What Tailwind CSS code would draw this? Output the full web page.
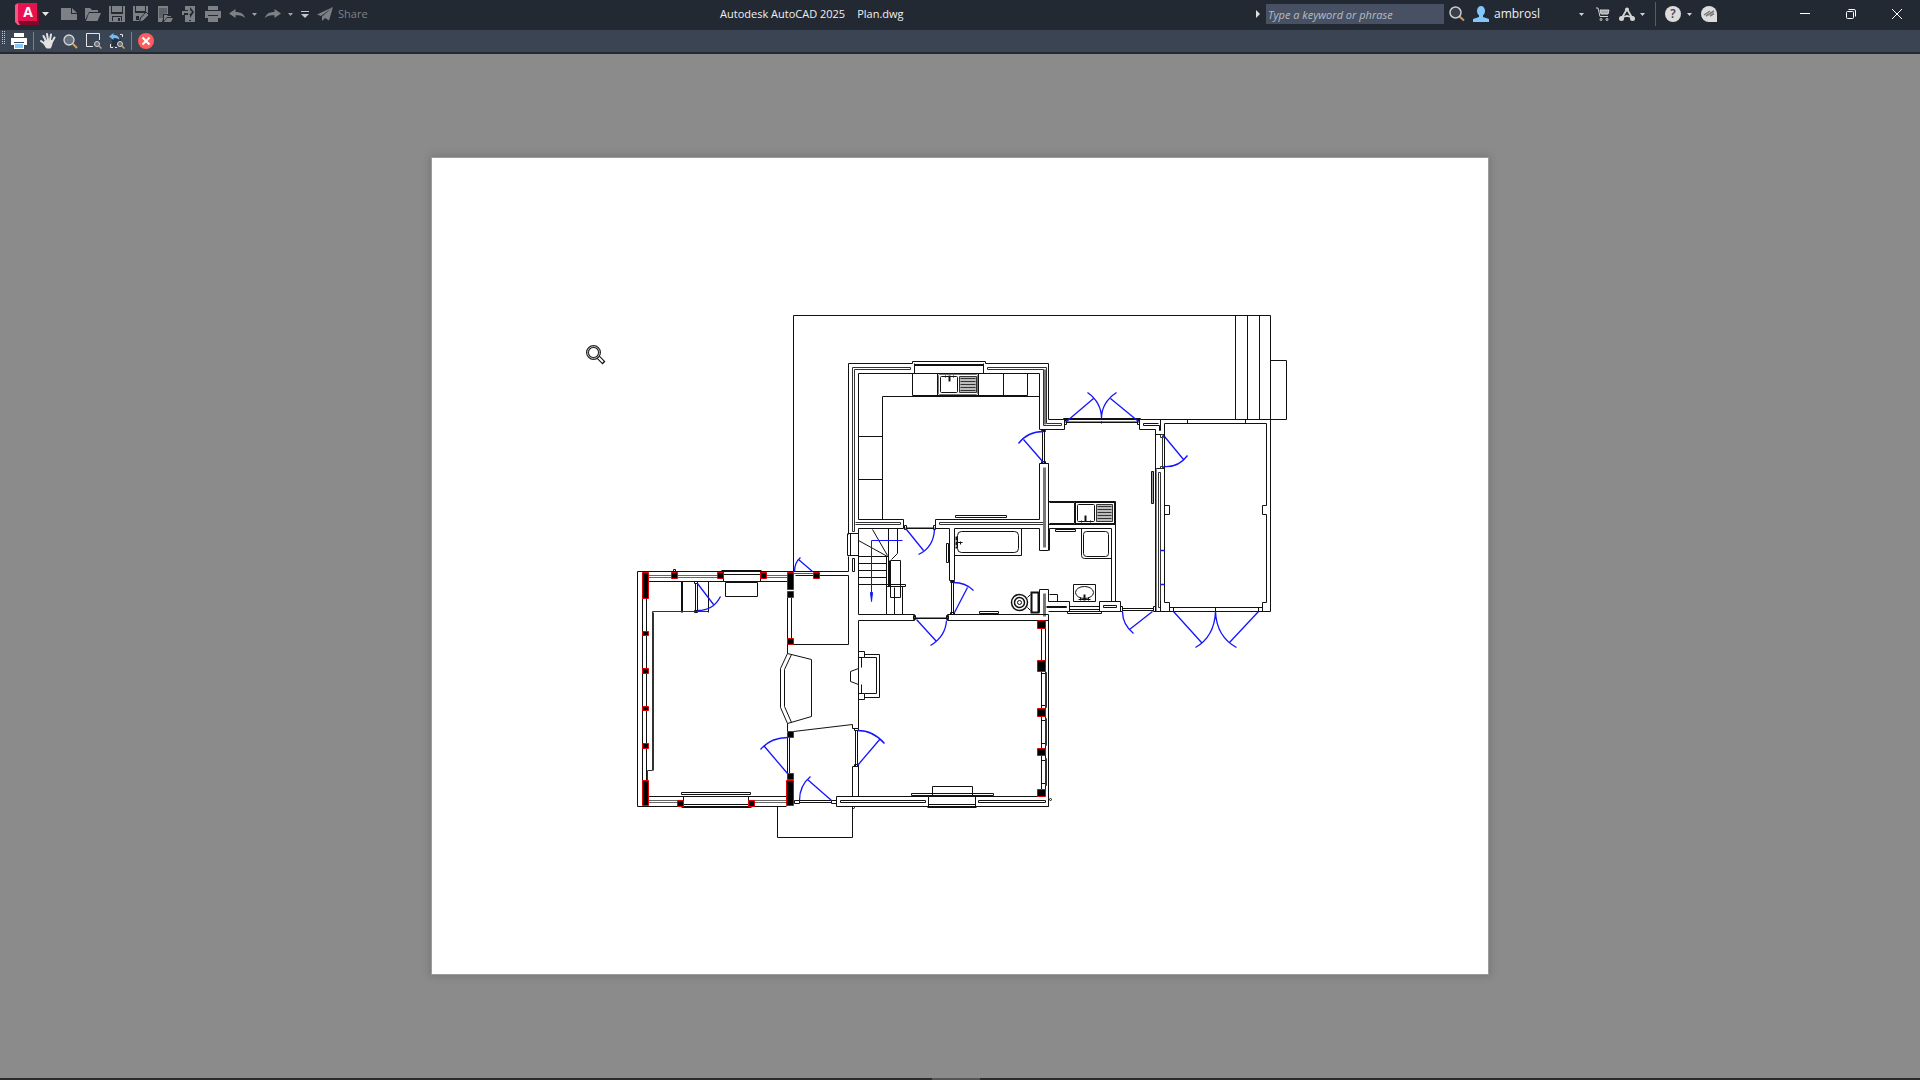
<!DOCTYPE html>
<html lang="en">
<head>
  <meta charset="UTF-8" />
  <meta name="viewport" content="width=device-width, initial-scale=1.0">
  <title>Autodesk AutoCAD 2025 - Plan.dwg</title>
  <script src="https://cdn.jsdelivr.net/npm/@tailwindcss/browser@4"></script>
</head>
<body class="flex min-h-screen flex-col overflow-hidden bg-[#8b8b8b] font-['Open_Sans','Noto_Sans',sans-serif] text-[11px] text-[#f0f0f0]">

  <!-- Title bar -->
  <header class="flex h-[30px] shrink-0 items-center bg-[#222933] pb-0.5">
    <div class="flex items-center pl-[15px] text-[#7d8186]">
      <button aria-label="Application menu" class="relative flex h-[22px] w-6 items-center justify-center">
        <svg class="absolute inset-0" width="24" height="22" viewBox="0 0 24 22">
          <path d="M0 2L3 0H22V18L24 22H3L0 19Z" fill="#ec5c86"/>
          <path d="M3 18H22L24 4V22H5Z" fill="#7d0c2c"/>
          <path d="M3 0H22V18H3Z" fill="#e5124f"/>
        </svg>
        <span class="relative -top-0.5 left-px text-sm font-bold leading-none text-white">A</span>
      </button>
      <button aria-label="Menu arrow" class="mr-1.5 flex h-6 w-3 items-center justify-center">
        <svg width="7" height="4" viewBox="0 0 7 4"><path d="M0 0H7L3.500 4Z" fill="#e8e8e8"/></svg>
      </button>
      <button aria-label="New" class="flex h-6 w-6 items-center justify-center">
        <svg width="16" height="16" viewBox="0 0 16 16" fill="currentColor"><path d="M0 2H10V8H16V14H0Z"/><path d="M11 2L16 7H11Z"/></svg>
      </button>
      <button aria-label="Open" class="flex h-6 w-6 items-center justify-center">
        <svg width="16" height="16" viewBox="0 0 16 16" fill="currentColor"><path d="M0 2H5L7 4H13V6H4L1 12L0 14Z"/><path d="M4 7H16L12.500 15H1Z"/></svg>
      </button>
      <button aria-label="Save" class="flex h-6 w-6 items-center justify-center">
        <svg width="16" height="16" viewBox="0 0 16 16" fill="currentColor"><path fill-rule="evenodd" d="M0 0H2V8H14V0H16V16H0ZM3 10V15H13V10Z"/><path d="M3 0H13V6H3Z"/><path d="M4 11H12V15H4Z"/><path d="M9 12H11V15H9Z" fill="#222933"/></svg>
      </button>
      <button aria-label="Save as" class="flex h-6 w-6 items-center justify-center">
        <svg width="16" height="16" viewBox="0 0 16 16" fill="currentColor"><path d="M0 0H2V7H13V0H15V7L8 14L8 15H0ZM3 0H12V5H3ZM3 10V14H6V10Z" fill-rule="evenodd"/><path d="M13 6L16 9L10 15L6.500 16L7.500 12Z" stroke="#222933"/></svg>
      </button>
      <button aria-label="Open from web and mobile" class="flex h-6 w-6 items-center justify-center">
        <svg width="16" height="16" viewBox="0 0 16 16" fill="currentColor"><path fill-rule="evenodd" d="M1 0H11V8H6V13L5 16H1ZM2 2V12H6V8L10 7V2Z"/><path opacity=".65" d="M2 2H10V8H6V12H2Z"/><path d="M7 9H10L11 10H14V11H10L7 15ZM10 12H16L14 16H7Z"/></svg>
      </button>
      <button aria-label="Save to web and mobile" class="flex h-6 w-6 items-center justify-center">
        <svg width="16" height="16" viewBox="0 0 16 16" fill="currentColor"><path d="M4 0H14V16H4V9H9V12L13 6L9 1V4H4Z"/><path d="M1 5H7V2L11 6L7 10V7H3V9H1Z"/><path d="M8 14H10V15H8Z" fill="#222933"/></svg>
      </button>
      <button aria-label="Plot" class="flex h-6 w-6 items-center justify-center">
        <svg width="16" height="16" viewBox="0 0 16 16" fill="currentColor"><path d="M3 0H13V4H3ZM0 5H16V12H13V9H3V12H0ZM3 10H13V16H3Z"/></svg>
      </button>
      <button aria-label="Undo" class="flex h-6 w-6 items-center justify-center">
        <svg width="16" height="10" viewBox="0 0 16 10" fill="currentColor"><path d="M0 4.500L6.500 0V3C12 3 15 5 16 9C13 6.500 11 6.200 6.500 6.200V9Z"/></svg>
      </button>
      <button aria-label="Undo list" class="flex h-6 w-3 items-center pl-[3px]">
        <svg width="5" height="3" viewBox="0 0 5 3"><path d="M0 0H5L2.500 3Z" fill="#a0a3a8"/></svg>
      </button>
      <button aria-label="Redo" class="flex h-6 w-6 items-center justify-center">
        <svg width="16" height="10" viewBox="0 0 16 10" fill="currentColor"><path d="M16 4.500L9.500 0V3C4 3 1 5 0 9C3 6.500 5 6.200 9.500 6.200V9Z"/></svg>
      </button>
      <button aria-label="Redo list" class="flex h-6 w-3 items-center pl-[3px]">
        <svg width="5" height="3" viewBox="0 0 5 3"><path d="M0 0H5L2.500 3Z" fill="#a0a3a8"/></svg>
      </button>
      <button aria-label="Customize toolbar" class="flex h-6 w-4 items-center justify-center">
        <svg width="8" height="7" viewBox="0 0 8 7"><path d="M0 0H8V1H0ZM0 3H8L4 7Z" fill="#c4c6c9"/></svg>
      </button>
      <button class="ml-1 flex h-6 items-center gap-[5px]">
        <svg width="16" height="14" viewBox="0 0 16 14" fill="currentColor"><path d="M16 0L0 7.500L4 9ZM16 0L5 9.500V14L8 11L12 13.500Z"/></svg>
        Share
      </button>
    </div>

    <h1 class="flex flex-1 justify-center gap-3 whitespace-nowrap"><span>Autodesk AutoCAD 2025</span><span>Plan.dwg</span></h1>

    <div class="flex items-center">
      <button aria-label="Collapse search" class="flex h-6 w-2.5 items-center">
        <svg width="4" height="8" viewBox="0 0 4 8"><path d="M0 0L4 4L0 8Z" fill="#e0e0e0"/></svg>
      </button>
      <input type="text" aria-label="Search" placeholder="Type a keyword or phrase" class="h-5 w-[178px] bg-[#485164] px-0.5 italic placeholder:text-[#b9bcc2]">
      <button aria-label="Find" class="ml-[5px] flex h-6 w-6 items-center">
        <svg width="16" height="16" viewBox="0 0 16 16" fill="none"><path d="M10 10L15 14.500" stroke="#c59a5f" stroke-width="2"/><circle cx="6.500" cy="6.500" r="5.500" fill="#394049" stroke="#c9ccd0" stroke-width="1.500"/></svg>
      </button>
      <button class="flex h-6 w-[111px] items-center gap-[5px] text-xs">
        <svg width="16" height="16" viewBox="0 0 16 16" fill="#83c7fa"><ellipse cx="8" cy="5" rx="4" ry="5"/><path d="M6 9H10V11L16 13V16H0V13L6 11Z"/></svg>
        ambrosl
        <svg class="ml-auto" width="5" height="3" viewBox="0 0 5 3"><path d="M0 0H5L2.500 3Z" fill="#d0d2d5"/></svg>
      </button>
      <button aria-label="App store" class="ml-3 flex h-6 w-[23px] items-center">
        <svg width="14" height="14" viewBox="0 0 14 14" fill="none" stroke="#d2d4d6"><path d="M0 1H2L4 9.500H12"/><path d="M4 3H13L12 7H5Z" fill="#a5a8ab"/><circle cx="5" cy="12.500" r="1"/><circle cx="11" cy="12.500" r="1"/></svg>
      </button>
      <button aria-label="Autodesk App" class="flex h-6 w-9 items-center gap-[5px]">
        <svg width="16" height="14" viewBox="0 0 16 14" fill="none"><path d="M8 2L2.500 11.500M8 2L13.500 11.500M4 10L8 9L12 10" stroke="#d5d5d5" stroke-width="1.800"/><circle cx="8" cy="2.500" r="2" fill="#d5d5d5"/><circle cx="2.500" cy="11.500" r="2.500" fill="#d5d5d5"/><circle cx="13.500" cy="11.500" r="2.500" fill="#d5d5d5"/></svg>
        <svg width="5" height="3" viewBox="0 0 5 3"><path d="M0 0H5L2.500 3Z" fill="#d0d2d5"/></svg>
      </button>
      <div class="mr-[9px] h-6 w-px bg-[#555e6d]"></div>
      <button aria-label="Help" class="flex h-6 w-9 items-center gap-1.5">
        <span class="flex h-4 w-4 items-center justify-center rounded-full bg-[#dcdcdc] text-xs font-semibold text-[#3a3f47]">?</span>
        <svg width="5" height="3" viewBox="0 0 5 3"><path d="M0 0H5L2.500 3Z" fill="#d0d2d5"/></svg>
      </button>
      <button aria-label="Assistant" class="flex h-6 w-[81px] items-center">
        <svg width="16" height="16" viewBox="0 0 16 16"><path d="M8 0A8 8 0 1 0 8 16H16V8A8 8 0 0 0 8 0Z" fill="#dcdcdc"/><path d="M3 9L9 5M5 10L13 5M9 10L13 7.500" stroke="#777" stroke-width="1.500"/></svg>
      </button>
      <button aria-label="Minimize" class="flex h-7 w-[46px] items-center justify-center">
        <svg width="10" height="10" viewBox="0 0 10 10"><path d="M0 4H10V5H0Z" fill="#fff"/></svg>
      </button>
      <button aria-label="Restore" class="flex h-7 w-[46px] items-center justify-center">
        <svg width="10" height="10" viewBox="0 0 10 10" fill="none" stroke="#fff"><rect x=".5" y="2.500" width="7" height="7" rx="1"/><path d="M2.500 .5H8Q9.500 .5 9.500 2V7.500"/></svg>
      </button>
      <button aria-label="Close" class="flex h-7 w-[46px] items-center justify-center">
        <svg width="10" height="10" viewBox="0 0 10 10" stroke="#fff"><path d="M0 0L10 10M10 0L0 10"/></svg>
      </button>
    </div>
  </header>

  <!-- Plot preview toolbar -->
  <nav class="flex h-6 shrink-0 items-center border-b-2 border-[#222933] bg-[#3b4453]">
    <div class="flex h-full w-[7px] items-start justify-center pt-px">
      <svg width="3" height="13" viewBox="0 0 3 13" stroke="#c3c6ca" stroke-dasharray="1 1"><path d="M.5 0V13M2.500 0V13"/></svg>
    </div>
    <button aria-label="Plot" class="flex h-5 w-[23px] items-center justify-center">
      <svg width="16" height="16" viewBox="0 0 16 16" fill="#fff"><path d="M3 0H13V4H3ZM0 5H16V12H13V9H3V12H0Z"/><path d="M3 10H13V16H3Z"/><path d="M4 11H12V15H4Z" fill="#86c8f5"/></svg>
    </button>
    <div class="ml-[3px] mr-0.5 h-[18px] w-px bg-[#7a818c]"></div>
    <button aria-label="Pan" class="flex h-5 w-[23px] items-center justify-center">
      <svg width="16" height="16" viewBox="0 0 16 16" fill="none" stroke="#e2e2e2" stroke-width="2" stroke-linecap="round"><path d="M6 8L3.500 3M8 7L7 1M10 7L11 1.500M12 9L14.500 4.500M5 11L1 8"/><path d="M5 8L12 7.500L12 11L10.500 15H6.500L4 11Z" fill="#e2e2e2" stroke-width="1"/></svg>
    </button>
    <button aria-label="Zoom" class="flex h-5 w-[23px] items-center justify-center">
      <svg width="15" height="15" viewBox="0 0 15 15" fill="none"><path d="M10 10L14 14" stroke="#d4a55d" stroke-width="2"/><circle cx="6" cy="6" r="5" fill="#687180" stroke="#d5d7da" stroke-width="1.300"/></svg>
    </button>
    <button aria-label="Zoom window" class="flex h-5 w-[23px] items-center justify-center">
      <svg width="16" height="16" viewBox="0 0 16 16" fill="none"><path d="M7 13.500H.5V.5H13.500V7" stroke="#e5e5e5"/><path d="M13 13L15.500 15.500" stroke="#d4a55d" stroke-width="1.500"/><circle cx="11" cy="11" r="2.500" fill="#687180" stroke="#d5d7da"/></svg>
    </button>
    <button aria-label="Zoom previous" class="flex h-5 w-[23px] items-center justify-center">
      <svg width="16" height="16" viewBox="0 0 16 16" fill="none"><path d="M11 1.500H13.500V4M1.500 11V14.500H4M6 14.500H8" stroke="#e5e5e5"/><path d="M3 6H12V9L8 13H3Z" fill="#27303c"/><path d="M0 3.500L4.500 0V2C8 2 10 3 10.500 7C9 5.500 7.500 5 4.500 5V7Z" fill="#6fbdf2"/><path d="M13 13L15.500 15.500" stroke="#d4a55d" stroke-width="1.500"/><circle cx="11" cy="11" r="2.500" fill="#687180" stroke="#d5d7da"/></svg>
    </button>
    <div class="ml-[3px] mr-0.5 h-[18px] w-px bg-[#7a818c]"></div>
    <button aria-label="Close preview" class="flex h-5 w-[23px] items-center justify-center">
      <svg width="16" height="16" viewBox="0 0 16 16"><circle cx="8" cy="8" r="8" fill="#fb5e5e"/><path d="M4.500 4.500L11.500 11.500M11.500 4.500L4.500 11.500" stroke="#fff" stroke-width="2"/></svg>
    </button>
  </nav>

  <!-- Paper sheet -->
  <main class="flex flex-1 items-center justify-center">
    <div class="aspect-[1056/816] w-[55%] bg-white shadow-[0_0_0_1px_#9c9c9c,0_0_8px_2px_rgb(0_0_0/0.16)]">
      <svg class="block h-full w-full" viewBox="432 158 1056 816" role="img" aria-label="Ground floor plan">
        <g transform="translate(.5 .5)" fill="none" stroke="#111" stroke-width="1">

          <!-- terrace and steps -->
          <path d="M793 571V315H1270V611M1235 315V419M1247 315V419M1259 315V419M1270 360H1286V419H1270"/>

          <!-- kitchen walls -->
          <path d="M848 534V363H912M985 363H1048V419H1063M858 519V373H1039V429H1064V419M914 373V363M983 373V363"/>
          <path d="M912 361H985M912 361V363M985 361V363M914 364H983M914 365H983"/>
          <path d="M852 531V367H910V369H854V531H852M987 369V367H1046V423H1061V425H1043V369H987" stroke="#333"/>
          <path d="M1044.500 369V424" stroke="#777" stroke-width="2"/>
          <path d="M882 519V396H1039M858 436H882M858 479H882"/>
          <path d="M912 373V395H937V373M978 395H1027V373M1003 373V395"/>
          <path d="M858 519H903V528H858M935 528V519H1039M935 528H949M954 528H1039V550H1048V463H1039V519"/>
          <path d="M855 522H900V524H855M1043 522H939V524H1043" stroke="#333"/>
          <path d="M905 527H934" stroke="#888"/>
          <path d="M905 528H934M904 525H906V529H904ZM933 525H935V529H933Z"/>
          <path d="M955 515H1006V517H955Z"/>
          <path d="M1044 467V547" stroke="#777" stroke-width="3"/>
          <path d="M1042 430V463M1044 430V463M1041 430H1045V431H1041ZM1041 461H1045V463H1041Z"/>

          <!-- kitchen sink -->
          <rect x="937" y="373" width="41" height="22"/>
          <rect x="938" y="374" width="39" height="20" rx="1" stroke="#777"/>
          <rect x="940" y="376" width="17" height="16" rx="1"/>
          <path d="M959 376H976V392H959Z" fill="#bbb" stroke="#333"/>
          <path d="M960 378H975M960 381H975M960 384H975M960 387H975M960 390H975" stroke="#333"/>
          <path d="M943 376H955M945 375V377M953 375V377"/><path d="M949 375V381" stroke-width="2"/>

          <!-- back hall and utility -->
          <path d="M1064 421H1139" stroke="#888"/>
          <path d="M1063 418H1140V419H1063ZM1065 422H1138M1064 420H1066V424H1064ZM1137 420H1139V424H1137Z"/>
          <path d="M1101 421V423M1140 419H1270M1139 419V429H1155V611M1160 419V430H1159V425H1143V423H1158M1155 434H1164M1155 468H1164"/>
          <path d="M1162 435V468M1164 435V468M1160 434H1163V437H1160ZM1160 466H1163V468H1160Z" stroke="#333"/>
          <path d="M1164 602V423H1266M1187 419V423M1245 419V423"/>
          <path d="M1158 472H1160V607H1158Z" stroke="#333"/><path d="M1156 468V611" stroke="#888"/>
          <path d="M1151 471H1153V503H1151Z" fill="#999"/>
          <path d="M1048 463V524M1048 501H1115V601M1048 524H1115M1049 502H1074V523H1049M1049 528V550M1049 528H1111V601"/>
          <rect x="1075" y="502" width="39" height="21"/>
          <rect x="1077" y="504" width="17" height="17" rx="1"/>
          <path d="M1096 504H1112V521H1096Z" fill="#bbb" stroke="#333"/>
          <path d="M1097 506H1111M1097 509H1111M1097 512H1111M1097 515H1111M1097 518H1111" stroke="#333"/>
          <path d="M1079 521H1092M1081 520V522M1090 520V522"/><path d="M1085 515V521" stroke-width="2"/>
          <path d="M1055 529H1075V531H1055ZM1081 528V555Q1081 558 1084 558H1111"/>
          <rect x="1083" y="531" width="25" height="25" rx="3"/>
          <path d="M1039 612V589H1048V601H1069V611M1049 594H1057V601M1099 611V601H1120V611H1048M1069 606H1099M1069 609H1099M1067 611H1101V613H1067Z"/>
          <path d="M1044 593V616" stroke="#777" stroke-width="3"/>
          <path d="M1046 606H1066V607H1046M1103 605H1116V607H1103Z"/>
          <path d="M1073 584H1095V601H1073Z"/><ellipse cx="1084" cy="592" rx="9" ry="6"/>
          <path d="M1078 599H1090M1080 597V600M1088 597V600"/><path d="M1084 594V600" stroke-width="2"/>
          <path d="M1122 608H1153M1122 610H1153M1120 606H1122V611H1120ZM1153 606H1155V611H1153Z"/>

          <!-- garage -->
          <path d="M1164 505H1169V514H1164M1164 602H1169V611M1266 423V505H1262V514H1266V602H1262V611M1169 607H1262M1154 611H1270M1173 607V611M1215 607V611M1258 607V611M1160 600V611"/>

          <!-- bathroom -->
          <path d="M949 528V580H954V528M951 581V614M953 581V614M950 581H954V582H950ZM950 612H954V614H950Z"/>
          <path d="M946 543H948V562H946ZM979 611H998V613H979Z"/>
          <path d="M954 555H1021V528"/>
          <rect x="957" y="531" width="61" height="21" rx="4"/>
          <path d="M956 536V548" stroke-width="2" stroke-dasharray="4 1"/><path d="M956 542H962M960 541V544"/>
          <circle cx="1019" cy="602" r="8" stroke-width="1.500"/><circle cx="1019" cy="602" r="5" stroke-width="1.500"/><circle cx="1019" cy="602" r="2"/>
          <path d="M1027 597L1030 594M1027 607L1030 610"/>
          <path d="M1031 592H1038V612H1031Z" stroke-width="2"/>

          <!-- stairs -->
          <path d="M848 556V571M848 533H858V555H847V533M850 533V555M852 558H854V571H852Z"/>
          <path d="M858 528V614M858 540L887 556M872 529L887 555M888 528V586M897 528V553L891 559M858 556H888M858 563H886M858 570H886M858 577H886M858 584H905V586H886M886 556V614"/>
          <path d="M890 560H900V597H890ZM902 586V614M894 587V614M889 560V586"/>
          <path d="M858 614H914V620H858V728M1048 620H947V614H1048V806H975"/>
          <path d="M914 617H947" stroke="#888"/>
          <path d="M914 618H947M913 615H915V619H913ZM946 615H948V619H946Z"/>

          <!-- store and left room -->
          <path d="M793 571H848M795 575H848V644H793M787 597V653M791 597V638"/>
          <path d="M793 573H813" stroke="#555"/>
          <path d="M793 571H637V806H786M642 598V780M646 598V780M648 581H787M721 570H761M723 571V581M760 571V581M723 574H760"/>
          <path d="M648 575H717M648 577H717M766 575H787M766 577H787" stroke="#666"/>
          <path d="M673 571V569H675V571M725 582H757V596H725Z"/>
          <path d="M681 581V612M682 581V612M695 583V611M697 583V611M694 581H697V583H694ZM694 610H697V612H694ZM708 581V612"/>
          <path d="M708 611H652V770H647V780M653 612V770" stroke="#333"/>
          <path d="M787 653L780 668V707L787 723V731M791 654L784 669V706L791 722M787 653L811 659V716L787 723"/>
          <path d="M787 737V773M789 737V773M793 731L852 724V728H858"/>

          <!-- front wall -->
          <path d="M648 796H786M683 796V806M748 796V806M683 804H748M681 807H751M681 792H750V794H681Z"/>
          <path d="M648 800H677M648 802H677M754 800H786M754 802H786" stroke="#666"/>
          <path d="M794 800H799V803H794ZM831 800H836V803H831ZM799 800H831M799 802H831"/>
          <path d="M928 796H836V806H928ZM840 800H925V802H840ZM978 800H1045V802H978ZM928 804H975M928 796H1037M975 796V806M927 807H976M927 806H1048"/>
          <path d="M932 796V786H972V796M911 793H993V795H911Z"/>
          <path d="M777 806V837H852V806M852 796V766H858V796M855 730V766M857 730V766M854 728H858V730H854ZM854 764H858V766H854Z"/>
          <circle cx="853" cy="807" r="1"/><circle cx="1050" cy="799" r="1"/>

          <!-- living room hearth -->
          <path d="M858 668L850 671V681L858 684M858 651H864V657H858ZM858 693H864V699H858ZM861 657V667M861 684V693M864 654H879V697H864M864 657H876V693H864"/>

          <!-- east wall windows -->
          <path d="M1041 628V790M1045 628V790M1041 673H1045M1041 705H1045M1041 720H1045M1041 743H1045M1041 760H1045M1041 783H1045"/>
          <path d="M1045 672H1046V707H1045ZM1045 718H1046V745H1045ZM1045 758H1046V785H1045Z" stroke="#333"/>

          <!-- timber posts -->
          <g fill="#000" stroke="#e00000">
            <path d="M642 572H648V598H642ZM787 572H793V589H787ZM642 780H648V805H642ZM786 780H793V805H786Z"/>
            <path d="M671 572H677V578H671ZM717 572H723V578H717ZM760 572H766V578H760ZM813 572H819V578H813Z"/>
            <path d="M787 591H793V597H787ZM787 638H793V644H787ZM787 731H793V737H787ZM787 773H793V779H787Z"/>
            <path d="M642 631H648V635H642ZM642 668H648V673H642ZM642 706H648V710H642ZM642 743H648V748H642Z"/>
            <path d="M677 800H683V806H677ZM748 800H754V806H748Z"/>
            <path d="M1037 620H1045V628H1037ZM1037 660H1045V671H1037ZM1037 708H1045V716H1037ZM1037 748H1045V755H1037ZM1037 789H1045V796H1037Z"/>
          </g>

          <!-- door swings -->
          <g stroke="#1414ff" stroke-width="1.300">
            <path d="M1043 462L1023 439M1018 443Q1027 431 1043 431"/>
            <path d="M1066 421L1093 398M1087 392Q1101 402 1101 418M1138 421L1110 398M1116 392Q1101 402 1101 418"/>
            <path d="M1164 436L1183 459M1164 466Q1178 467 1187 455"/>
            <path d="M906 529L923 550M918 554Q933 547 934 529"/>
            <path d="M954 612L967 587M953 582Q965 582 973 590"/>
            <path d="M916 619L936 641M930 645Q945 636 946 620"/>
            <path d="M1152 611L1129 629M1122 611Q1122 624 1133 633"/>
            <path d="M1173 611L1201 642M1195 647Q1214 636 1215 611M1258 611L1229 642M1236 647Q1216 636 1215 611"/>
            <path d="M1160 550H1164M1160 584H1164"/>
            <path d="M697 583L713 604M697 610Q713 610 720 596"/>
            <path d="M812 571L798 559M794 571Q794 562 800 557"/>
            <path d="M787 773L764 746M760 749Q770 737 787 737"/>
            <path d="M831 800L807 779M799 800Q799 785 810 776"/>
            <path d="M857 765L880 738M857 730Q873 730 884 743"/>
            <path d="M902 540H871V595" stroke-width="1"/><path d="M870 592H872L871 601Z" fill="#1414ff" stroke-width="1"/>
          </g>
        </g>

        <!-- zoom cursor -->
        <g fill="none">
          <path d="M598 357L604 363" stroke="#111" stroke-width="4"/>
          <path d="M598 357L603 362" stroke="#fff" stroke-width="2"/>
          <circle cx="593.500" cy="352.500" r="6" stroke="#222" stroke-width="3"/>
          <circle cx="593.500" cy="352.500" r="6" stroke="#bbb"/>
        </g>
      </svg>
    </div>
  </main>

  <!-- hidden taskbar edge -->
  <footer class="flex h-0.5 shrink-0 justify-center bg-[#2c2c2c]"><div class="mr-2 w-12 bg-[#555]"></div></footer>
</body>
</html>
